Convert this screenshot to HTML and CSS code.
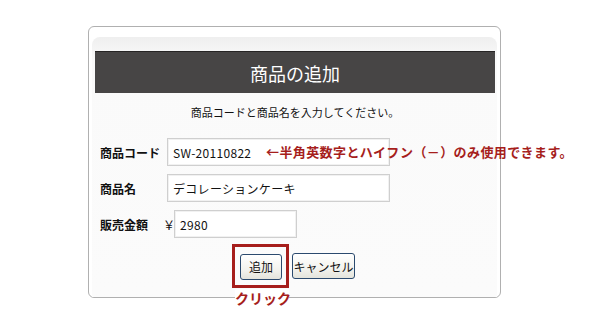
FILE: index.html
```html
<!DOCTYPE html>
<html lang="ja">
<head>
    <meta charset="UTF-8">
    <meta name="viewport" content="width=device-width, initial-scale=1.0">
    <title>商品の追加</title>
    <link rel="stylesheet" href="styles.css">
</head>
<body>

    <div class="frame">
        <div class="panel">
            <h1 class="panel-title">商品の追加</h1>
            <p class="lead">商品コードと商品名を入力してください。</p>

            <form class="item-form">
                <div class="row">
                    <label class="label">商品コード</label>
                    <input class="field field-wide" type="text" value="SW-20110822">
                    <span class="hint">←半角英数字とハイフン（－）のみ使用できます。</span>
                </div>
                <div class="row">
                    <label class="label">商品名</label>
                    <input class="field field-wide" type="text" value="デコレーションケーキ">
                </div>
                <div class="row">
                    <label class="label">販売金額</label>
                    <span class="yen">￥</span>
                    <input class="field field-price" type="text" value="2980">
                </div>

                <!-- 追加ボタンに注目枠 -->
                <div class="actions">
                    <span class="focus">
                        <button type="button" class="btn btn-add">追加</button>
                        <span class="focus-ring"></span>
                        <span class="focus-label">クリック</span>
                    </span>
                    <button type="button" class="btn btn-cancel">キャンセル</button>
                </div>
            </form>
        </div>
    </div>

</body>
</html>
```

FILE: styles.css
```css
html, body {
    height: 100%;
}

body {
    margin: 0;
    padding: 0;
    background-color: #fff;
    color: #111;
    font-family: "Noto Sans CJK JP", "Liberation Sans", sans-serif;
}

.frame {
    margin: 26px 0 0 88px;
    width: 405px;
    padding: 10px 3px 0 3px;
    border: 1px solid #b0b0b0;
    border-radius: 6px;
    background-color: #fff;
}

.panel {
    padding: 14px 2px 17px 3px;
    border-radius: 8px 8px 0 0;
    background: linear-gradient(#efefef, #fafafa 22px, #fbfbfb);
}

.panel-title {
    margin: 0;
    height: 42px;
    line-height: 42px;
    border-top: 1px solid #262424;
    box-sizing: border-box;
    background-color: #474545;
    color: #fff;
    font-size: 18px;
    font-weight: normal;
    text-align: center;
}

.lead {
    margin: 0;
    padding-top: 9px;
    line-height: 20px;
    font-size: 11px;
    text-align: center;
}

.item-form {
    margin-top: 16px;
    padding-left: 5px;
}

.row {
    position: relative;
    display: flex;
    align-items: center;
    height: 28px;
    margin-bottom: 8px;
}

.label {
    width: 67px;
    font-size: 12px;
    font-weight: bold;
}

.yen {
    display: inline-block;
    width: 11px;
    margin-left: -4px;
    font-size: 12px;
}

.field {
    height: 28px;
    box-sizing: border-box;
    padding: 0 5px;
    border: 1px solid #cfcfcf;
    box-shadow: inset 0 0 0 1px #f1f1f1;
    background-color: #fff;
    color: #111;
    font-family: inherit;
    font-size: 12px;
    letter-spacing: 0.3px;
}

.field-wide {
    width: 223px;
}

.field-price {
    width: 123px;
}

.hint {
    position: absolute;
    left: 166px;
    top: 0;
    line-height: 28px;
    white-space: nowrap;
    color: #a61e1c;
    font-size: 13px;
    font-weight: bold;
    letter-spacing: 0.4px;
}

.actions {
    display: flex;
    justify-content: center;
    gap: 10px;
    margin-top: 15px;
}

.focus {
    position: relative;
    display: inline-block;
}

.focus-ring {
    position: absolute;
    left: -8px;
    right: -7px;
    top: -9px;
    bottom: -8px;
    border: 3px solid #a61e1c;
}

.focus-label {
    position: absolute;
    left: -5px;
    right: -7px;
    top: 36px;
    line-height: 18px;
    background-color: #fff;
    color: #a61e1c;
    font-size: 14px;
    font-weight: bold;
    text-align: center;
    white-space: nowrap;
}

.btn {
    height: 26px;
    padding: 0;
    border: 1px solid #2b4a6e;
    border-radius: 3px;
    background: linear-gradient(#ffffff, #f3f3ee 60%, #e4e4dc);
    color: #111;
    font-family: inherit;
    font-size: 12px;
}

.btn-add {
    width: 42px;
}

.btn-cancel {
    width: 63px;
}
```
